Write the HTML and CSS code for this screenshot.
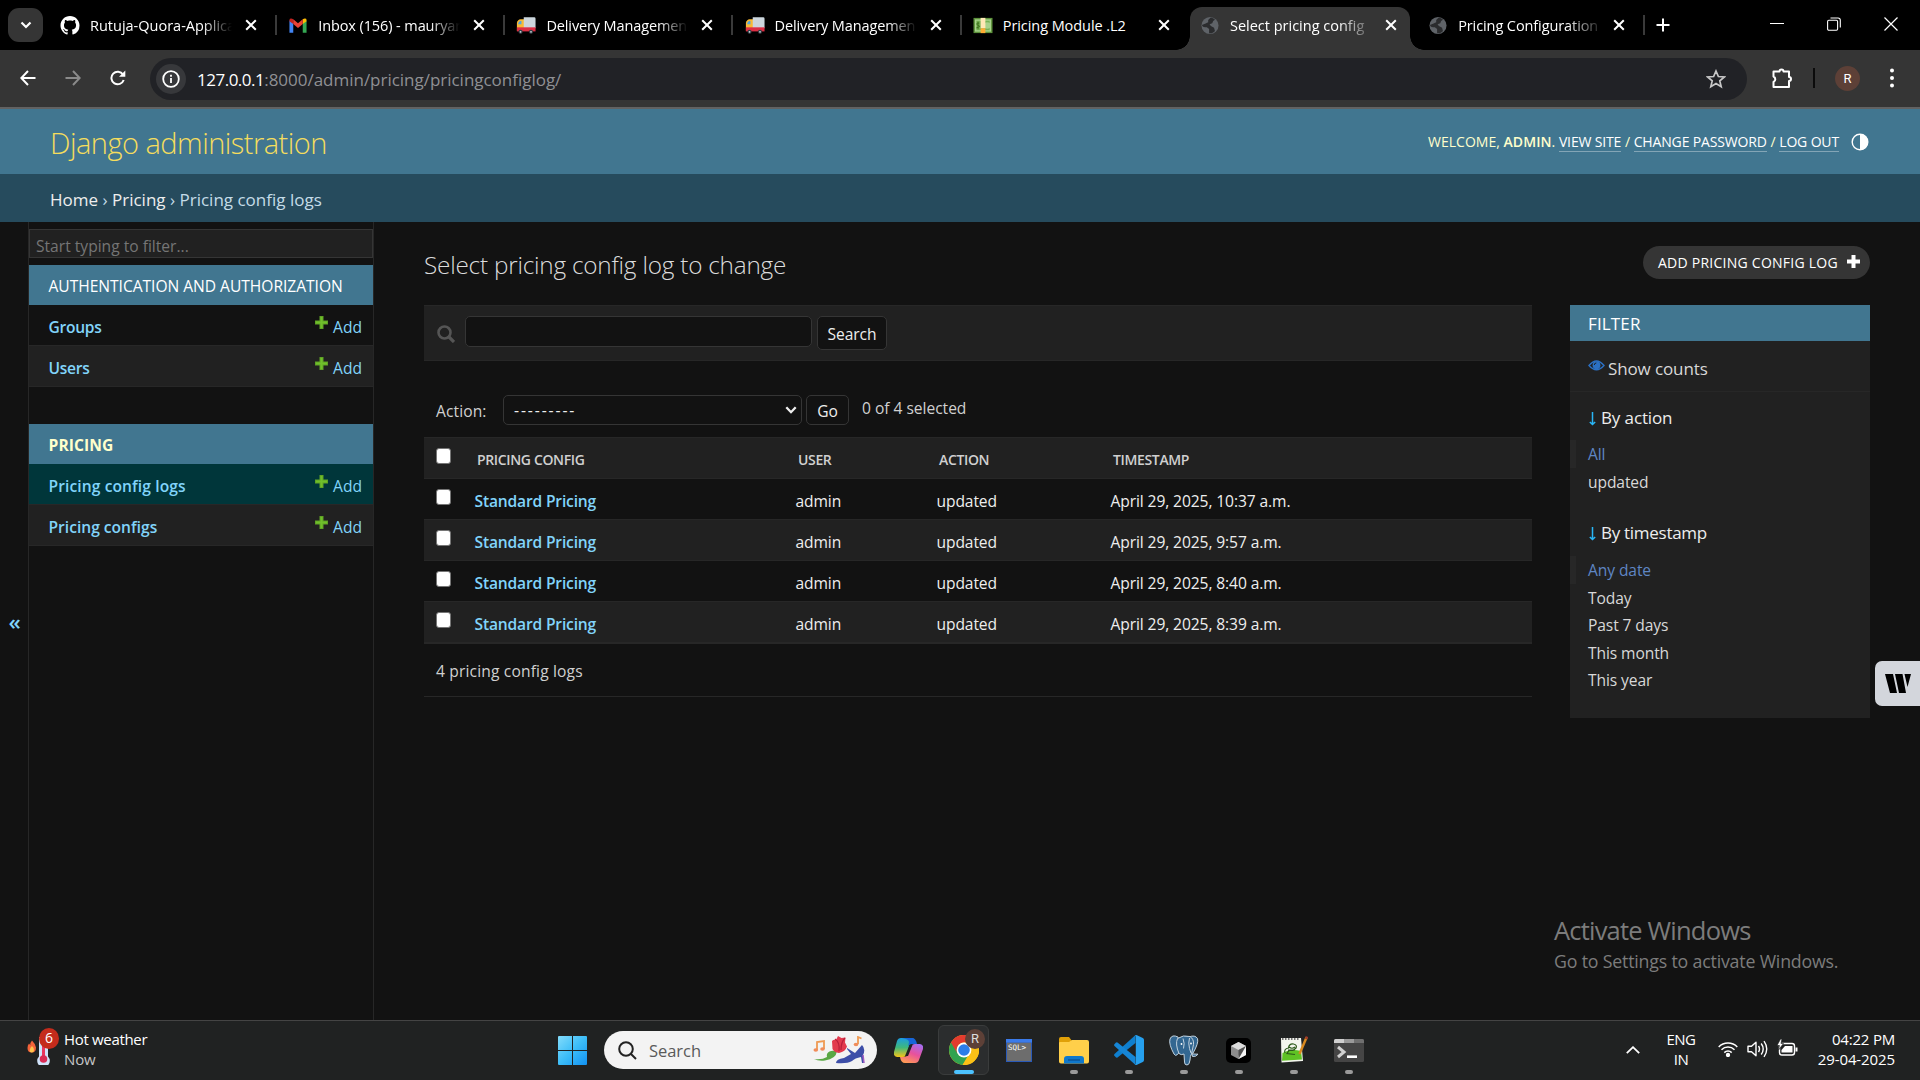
FILE: index.html
```html
<!DOCTYPE html>
<html lang="en">
<head>
<meta charset="utf-8">
<title>Select pricing config log to change | Django site admin</title>
<link rel="stylesheet" href="styles.css">
</head>
<body>
<svg class="defs" aria-hidden="true">
  <symbol id="close" viewBox="0 0 12 12"><path d="M1.2 1.2l9.6 9.6M10.8 1.2l-9.6 9.6" stroke="#fff" stroke-width="2" fill="none"/></symbol>
  <symbol id="truck" viewBox="0 0 22 20">
    <path d="M1 7q1-4 4-4h4v13H1z" fill="#f9b934"/><path d="M2.3 8.500q.6-3.500 2.700-3.500h1v3.500z" fill="#4fa5e0"/>
    <path d="M8.500 1h11.500q1.500 0 1.500 1.500V13h-13z" fill="#ccd6dd"/><path d="M1 12h20.500v4.500H1z" fill="#dd2e44"/>
    <circle cx="5" cy="17" r="2.300" fill="#333c43"/><circle cx="16.500" cy="17" r="2.300" fill="#333c43"/><circle cx="5" cy="17" r="1" fill="#ccd6dd"/><circle cx="16.500" cy="17" r="1" fill="#ccd6dd"/>
  </symbol>
  <symbol id="globe" viewBox="0 0 20 20"><circle cx="10" cy="10" r="9.500" fill="#5f6368"/><path d="M10.500 1.500L8 4v2.500L4.500 8 1 9.500C1.500 12 4 12 6.500 12l2.500 2v4.500c2 .5 5-.5 6.500-2.500l-1-3.500L11 10.500l-1.500-2 3-1 1-2.500 2-1.500c-1.500-1.300-3-2-5-2z" fill="#2b2c2e"/></symbol>
  <symbol id="plus-green" viewBox="0 0 13 13"><path d="M4.500 0h4v4.500H13v4H8.500V13h-4V8.500H0v-4h4.500z" fill="#5fa225"/><path d="M5.500 1h2v4.500H12v2H7.500V12h-2V7.500H1v-2h4.500z" fill="#70bf2b"/></symbol>
</svg>

<div class="screen">
  <header class="tabstrip">
    <button class="tab-search" aria-label="Search tabs"><svg width="12" height="8" viewBox="0 0 12 8"><path d="M1.500 1.500L6 6l4.500-4.500" fill="none" stroke="#fff" stroke-width="2.200"/></svg></button>
    <nav class="tabs">
      <div class="tab"><svg class="fav" viewBox="0 0 16 16"><path fill="#fff" d="M8 0C3.580 0 0 3.580 0 8c0 3.540 2.290 6.530 5.470 7.590.4.070.55-.17.55-.38 0-.19-.01-.82-.01-1.490-2.010.37-2.530-.49-2.690-.94-.09-.23-.48-.94-.82-1.130-.28-.15-.68-.52-.01-.53.63-.01 1.080.58 1.230.82.72 1.210 1.870.87 2.330.66.07-.52.28-.87.51-1.070-1.780-.2-3.640-.89-3.640-3.950 0-.87.31-1.590.82-2.150-.08-.2-.36-1.020.08-2.120 0 0 .67-.21 2.200.82.64-.18 1.320-.27 2-.27s1.360.09 2 .27c1.530-1.040 2.200-.82 2.200-.82.44 1.100.16 1.920.08 2.120.51.56.82 1.270.82 2.150 0 3.070-1.870 3.750-3.650 3.950.29.25.54.73.54 1.480 0 1.070-.01 1.930-.01 2.200 0 .21.15.46.55.38A8.010 8.010 0 0016 8c0-4.420-3.580-8-8-8z"/></svg><span class="tab-title t1">Rutuja-Quora-Applica</span><svg class="x"><use href="#close"/></svg></div>
      <div class="tab"><svg class="fav" viewBox="0 0 20 20"><path d="M1 17.500V4.500l4 3v10z" fill="#4285f4"/><path d="M15 17.500v-10l4-3v13z" fill="#34a853"/><path d="M15 3.500q2-1.500 3.500-.5.500.500.500 2.500L15 8.500z" fill="#fbbc04"/><path d="M5 3.500q-2-1.500-3.500-.5Q1 3.500 1 5.500l4 3z" fill="#c5221f"/><path d="M5 3.500l5 4 5-4v5l-5 4-5-4z" fill="#ea4335"/></svg><span class="tab-title t2">Inbox (156) - mauryar</span><svg class="x"><use href="#close"/></svg></div>
      <div class="tab"><svg class="fav"><use href="#truck"/></svg><span class="tab-title t3">Delivery Managemen</span><svg class="x"><use href="#close"/></svg></div>
      <div class="tab"><svg class="fav"><use href="#truck"/></svg><span class="tab-title t3">Delivery Managemen</span><svg class="x"><use href="#close"/></svg></div>
      <div class="tab last"><svg class="fav" viewBox="0 0 20 20"><path d="M0 2h20v16H0z" fill="#5c913b"/><path d="M1.500 3.500h17v13h-17z" fill="#a7d28b"/><path d="M3 5h14v10H3z" fill="#77b255"/><circle cx="14.500" cy="10" r="3.500" fill="#a7d28b"/><path d="M7.500 2h5v11h-5z" fill="#ffe8b6"/><path d="M7.500 13h5v5h-5z" fill="#ffac33"/><path d="M6 7.500q-3-.5-2.500 1T6 10.500 3 12.500M4.800 6v8" stroke="#3e721d" fill="none"/></svg><span class="tab-title t4">Pricing Module .L2</span><svg class="x"><use href="#close"/></svg></div>
      <div class="tab active"><svg class="fav globe"><use href="#globe"/></svg><span class="tab-title">Select pricing config</span><svg class="x"><use href="#close"/></svg></div>
      <div class="tab"><svg class="fav globe"><use href="#globe"/></svg><span class="tab-title t5">Pricing Configuration</span><svg class="x"><use href="#close"/></svg></div>
    </nav>
    <svg class="newtab" viewBox="0 0 14 14"><path d="M7 .5v13M.5 7h13" stroke="#fff" stroke-width="2"/></svg>
    <div class="win-controls">
      <svg width="14" height="14" viewBox="0 0 14 14"><path d="M0 6.500h14" stroke="#fff" stroke-width="1"/></svg>
      <svg width="14" height="14" viewBox="0 0 14 14" fill="none" stroke="#fff" stroke-width="1.100"><rect x=".6" y="3.300" width="10" height="10" rx="1.200"/><path d="M3.500 1h7.500q2.300 0 2.300 2.300V10.500"/></svg>
      <svg width="14" height="14" viewBox="0 0 14 14"><path d="M.5.5l13 13M13.500.5l-13 13" stroke="#fff" stroke-width="1.200"/></svg>
    </div>
  </header>

  <div class="toolbar">
    <svg class="tool" viewBox="0 0 16 16"><path d="M15.500 8H2M8 1L1.300 8 8 15" fill="none" stroke="#fff" stroke-width="2"/></svg>
    <svg class="tool" viewBox="0 0 16 16"><path d="M.5 8H14M8 1l6.700 7L8 15" fill="none" stroke="#8a8a8a" stroke-width="2"/></svg>
    <svg class="tool" viewBox="0 0 16 16"><path d="M13.700 10A6.300 6.300 0 1 1 13 4.500" fill="none" stroke="#fff" stroke-width="2"/><path d="M15.300.5v6.200H9z" fill="#fff"/></svg>
    <div class="omnibox">
      <span class="info"><svg width="18" height="18" viewBox="0 0 18 18"><circle cx="9" cy="9" r="7.800" fill="none" stroke="#fff" stroke-width="1.800"/><path d="M9 8v5M9 4.800v1.900" stroke="#fff" stroke-width="1.800"/></svg></span>
      <span class="url"><b>127.0.0.1</b>:8000/admin/pricing/pricingconfiglog/</span>
      <svg class="star" viewBox="0 0 20 20"><path d="M10 2l2.400 5.500 5.900.5-4.500 3.900 1.400 5.800L10 14.600l-5.200 3.100 1.400-5.800L1.700 8l5.900-.5z" fill="none" stroke="#c7c7c7" stroke-width="1.700"/></svg>
    </div>
    <svg class="puzzle" viewBox="0 0 22 22"><path d="M2.500 4.500h6a2 2 0 0 1 4 0h5.500v5.500a2 2 0 0 1 0 4v6h-15.500v-5a3 3 0 0 0 0-5.500z" fill="none" stroke="#fff" stroke-width="2" stroke-linejoin="round"/></svg>
    <i class="divider"></i>
    <span class="avatar">R</span>
    <svg class="kebab" viewBox="0 0 6 20"><g fill="#fff"><circle cx="3" cy="2.500" r="2"/><circle cx="3" cy="10" r="2"/><circle cx="3" cy="17.500" r="2"/></g></svg>
  </div>

  <div class="admin">
    <header class="site-header">
      <h1>Django administration</h1>
      <div class="user-tools"><p>Welcome, <strong>admin</strong>. <a>View site</a> / <a>Change password</a> / <a>Log out</a></p>
        <svg width="18" height="18" viewBox="0 0 18 18"><circle cx="9" cy="9" r="7.800" fill="none" stroke="#fff" stroke-width="1.400"/><path d="M9 1a8 8 0 0 1 0 16z" fill="#fff"/></svg></div>
    </header>
    <div class="breadcrumbs"><a>Home</a> › <a>Pricing</a> › <span>Pricing config logs</span></div>

    <div class="main">
      <button class="nav-toggle">«</button>
      <nav class="sidebar">
        <div class="nav-filter">Start typing to filter...</div>
        <section class="module">
          <h2>Authentication and Authorization</h2>
          <div class="row"><a class="model tight">Groups</a><a class="add"><svg><use href="#plus-green"/></svg>Add</a></div>
          <div class="row alt"><a class="model tight">Users</a><a class="add"><svg><use href="#plus-green"/></svg>Add</a></div>
        </section>
        <section class="module">
          <h2 class="current">Pricing</h2>
          <div class="row current"><a class="model wide">Pricing config logs</a><a class="add"><svg><use href="#plus-green"/></svg>Add</a></div>
          <div class="row alt"><a class="model">Pricing configs</a><a class="add"><svg><use href="#plus-green"/></svg>Add</a></div>
        </section>
      </nav>

      <main class="content">
        <div class="title-row">
          <h1>Select pricing config log to change</h1>
          <a class="addlink">Add pricing config log <svg width="13" height="13" viewBox="0 0 13 13"><path d="M4.500 0h4v4.500H13v4H8.500V13h-4V8.500H0v-4h4.500z" fill="#fff"/></svg></a>
        </div>
        <div class="columns">
          <div class="changelist">
            <div class="searchbar">
              <svg width="18" height="18" viewBox="0 0 18 18" fill="none" stroke="#555"><circle cx="7.500" cy="7.500" r="6" stroke-width="2.600"/><path d="M12 12l5 5" stroke-width="3.200"/></svg>
              <div class="field"></div>
              <button class="btn search-btn">Search</button>
            </div>
            <div class="actions">
              <label>Action:</label>
              <div class="select"><span>---------</span><svg width="12" height="8" viewBox="0 0 12 8"><path d="M1.300 1.300L6 6.200l4.700-4.900" fill="none" stroke="#eee" stroke-width="2.300"/></svg></div>
              <button class="btn go-btn">Go</button>
              <span class="count">0 of 4 selected</span>
            </div>
            <table class="results">
              <colgroup><col class="c-check"><col class="c-config"><col class="c-user"><col class="c-action"><col></colgroup>
              <thead><tr><th><i class="check"></i></th><th>Pricing config</th><th>User</th><th>Action</th><th>Timestamp</th></tr></thead>
              <tbody>
                <tr><td><i class="check"></i></td><th>Standard Pricing</th><td>admin</td><td>updated</td><td>April 29, 2025, 10:37 a.m.</td></tr>
                <tr><td><i class="check"></i></td><th>Standard Pricing</th><td>admin</td><td>updated</td><td>April 29, 2025, 9:57 a.m.</td></tr>
                <tr><td><i class="check"></i></td><th>Standard Pricing</th><td>admin</td><td>updated</td><td>April 29, 2025, 8:40 a.m.</td></tr>
                <tr><td><i class="check"></i></td><th>Standard Pricing</th><td>admin</td><td>updated</td><td>April 29, 2025, 8:39 a.m.</td></tr>
              </tbody>
            </table>
            <p class="paginator">4 pricing config logs</p>
          </div>

          <aside class="filter">
            <h2>Filter</h2>
            <div class="counts"><svg width="17" height="12" viewBox="0 0 17 12"><path d="M1 5.500Q8.500-3.500 16 5.500 8.500 14 1 5.500z" fill="none" stroke="#2b70c4" stroke-width="1.400"/><circle cx="8.500" cy="5.200" r="3.900" fill="#2b70c4"/><path d="M6.300 5a2 2 0 0 1 2-2" stroke="#212121" fill="none"/></svg>Show counts</div>
            <h3><svg width="7" height="14" viewBox="0 0 7 14"><path d="M3.500 0v12M.8 10l2.700 2.500L6.200 10" fill="none" stroke="#29b6f6" stroke-width="1.500"/></svg>By action</h3>
            <ul class="by-action"><li class="selected">All</li><li>updated</li></ul>
            <h3 class="second"><svg width="7" height="14" viewBox="0 0 7 14"><path d="M3.500 0v12M.8 10l2.700 2.500L6.200 10" fill="none" stroke="#29b6f6" stroke-width="1.500"/></svg>By timestamp</h3>
            <ul class="by-time"><li class="selected">Any date</li><li>Today</li><li>Past 7 days</li><li>This month</li><li>This year</li></ul>
          </aside>
        </div>
      </main>
    </div>
    <div class="side-widget"><svg width="26" height="19" viewBox="0 0 26 19"><path d="M0 0h8l4 19H5zM10 0h7.500l3.500 19h-7zM19.500 0H26l-3.500 13z" fill="#000"/></svg></div>
    <div class="watermark"><p class="big">Activate Windows</p><p>Go to Settings to activate Windows.</p></div>
  </div>

  <footer class="taskbar">
    <div class="weather">
      <svg width="35" height="36" viewBox="0 0 35 36">
        <path d="M5 11.500q3.500 3.500 4 7Q9 23.500 4.800 23.500 .5 23.500 .5 19q0-3 1.500-4.500L3.200 16q0-2.500 1.800-4.500z" fill="#f4633a"/><path d="M5 17q2.300 2 2 4.200Q7 23.500 4.800 23.500 2.500 23.500 2.700 21 3.200 18.500 5 17z" fill="#ffc34d"/>
        <path d="M12 8h9v19.500a6.300 6.300 0 1 1-9 0z" fill="#cfe3fa"/><path d="M15 14h3v15h-3z" fill="#e8365d"/><circle cx="16.500" cy="30" r="3.800" fill="#d92c55"/>
      </svg>
      <span class="badge">6</span>
      <div class="weather-text"><span>Hot weather</span><span class="now">Now</span></div>
    </div>
    <svg class="start" viewBox="0 0 29 29"><defs><linearGradient id="w" x1="0" y1="0" x2="1" y2="1"><stop offset="0" stop-color="#83dcfb"/><stop offset=".5" stop-color="#3cbdf8"/><stop offset="1" stop-color="#1292f2"/></linearGradient></defs><path d="M1 0h13v14H0V1q0-1 1-1zM15 0h13q1 0 1 1v13H15zM0 15h14v14H1q-1 0-1-1zM15 15h14v13q0 1-1 1H15z" fill="url(#w)"/></svg>
    <div class="tb-search">
      <svg width="19" height="19" viewBox="0 0 19 19" fill="none" stroke="#222" stroke-width="2"><circle cx="8" cy="8" r="6.800"/><path d="M13 13l5 5"/></svg>
      <span>Search</span>
      <svg class="doodle" width="52" height="28" viewBox="0 0 52 28">
        <path d="M4 14V6l7-1v8" fill="none" stroke="#ef9a52" stroke-width="1.800"/><ellipse cx="2.800" cy="14" rx="2.300" ry="1.800" fill="#f08c5a"/><ellipse cx="9.500" cy="13" rx="2.300" ry="1.800" fill="#f08c5a"/>
        <path d="M24 15q-1 8-12 9.500-7 .8-11-1.500 8 1 13-2-1-4 2.500-5.500 2.500-1 5-.5" fill="#5aa845"/>
        <path d="M19 5q2-2 4-1l2-4 3.500 2 4-.5-.5 5 2 4q-1.500 5-8 6.500-5-.5-6.500-4z" fill="#e23a4e"/><path d="M22 3q5 3 4 12M32 2q-4 4-4 12" stroke="#b81f3b" stroke-width="1.200" fill="none"/>
        <path d="M34 12l8 5 7-8q4 4 1 10l1 8h-2l-1-6q-6 1-9 4-5 3-16 2 0-4 8-5l7-4-4-5z" fill="#3d4ea8"/><path d="M50 19l1 8" stroke="#a05bc0" stroke-width="1.500"/>
        <path d="M45 8V1l3.500 1.500" fill="none" stroke="#ef9a52" stroke-width="1.800"/><ellipse cx="43" cy="8.500" rx="2.300" ry="1.800" fill="#f08c5a"/>
      </svg>
    </div>
    <div class="apps">
      <div class="app"><svg width="29" height="26" viewBox="0 0 29 26"><defs><linearGradient id="c1" x1="0" y1="0" x2="0" y2="1"><stop offset="0" stop-color="#1b9de2"/><stop offset=".5" stop-color="#3fb87b"/><stop offset="1" stop-color="#f5c518"/></linearGradient><linearGradient id="c2" x1=".8" y1="0" x2=".3" y2="1"><stop offset="0" stop-color="#a56df0"/><stop offset=".5" stop-color="#e8519c"/><stop offset="1" stop-color="#ff9a55"/></linearGradient></defs><path d="M7 1h13q-3 1-4 5l-3 11q-1 3-4 3H3q-4-1-3-5L3 4Q4 1 7 1z" fill="url(#c1)"/><path d="M8 1h11q3 1 4 6h-5q-3 0-4 3l1-5q0-3-7-4z" fill="#1765d8"/><path d="M21 7h5q4 1 3 5l-4 11q-1 3-4 3H11q-4 0-5-6h4q3 0 4-3l3-7q1-3 4-3z" fill="url(#c2)"/><path d="M15.500 8h3L14 19h-3z" fill="#202222"/></svg></div>
      <div class="app focused"><svg width="30" height="30" viewBox="0 0 30 30"><circle cx="15" cy="15" r="15" fill="#fbc116"/><path d="M15 15L2 7.500a15 15 0 0 0 11.500 22.400L20.500 18z" fill="#31a350"/><path d="M2 7.500a15 15 0 0 1 26 0H15a7.500 7.500 0 0 0-6.500 11.200z" fill="#e33b2e"/><path d="M15 7.500h13A15 15 0 0 1 13.500 30l8-11.200z" fill="#fbc116"/><circle cx="15" cy="15" r="7.400" fill="#fff"/><circle cx="15" cy="15" r="5.800" fill="#2b7de9"/></svg><span class="profile">R</span><i class="run on"></i></div>
      <div class="app"><svg width="26" height="23" viewBox="0 0 26 23"><path d="M0 0h26v23H0z" fill="#2a5ab8"/><path d="M1 3.500h24V22H1z" fill="#6d6d6d"/><path d="M0 0h26v3.500H0z" fill="#3b7bea"/><text x="2" y="10.500" class="sql">SQL&gt;</text></svg></div>
      <div class="app"><svg width="30" height="27" viewBox="0 0 30 27"><path d="M0 2q0-2 2-2h8l3 4v5H0z" fill="#e0a008"/><path d="M0 6q0-1 1-1h9l3-2h15q2 0 2 2v19.500q0 2-2 2H2q-2 0-2-2z" fill="#ffcf4a"/><path d="M5 26.500V22q0-3 3-3h14q3 0 3 3v4.500z" fill="#0f78cc"/><path d="M9 23h12" stroke="#0a4f91" stroke-width="1.300"/></svg><i class="run"></i></div>
      <div class="app"><svg width="30" height="30" viewBox="0 0 30 30"><path d="M21.500 0v8L3.500 22.500q-1 .5-1.700-.2L.4 20.800q-.7-.9.100-1.700z" fill="#0f7fce"/><path d="M21.500 30v-8L3.500 7.500q-1-.5-1.700.2L.4 9.200q-.7.900.100 1.700z" fill="#1686d6"/><path d="M21 .300q1-.5 2-.1l5.800 2.700q1.200.6 1.200 2v20.200q0 1.400-1.200 2L23 29.800q-1 .4-2-.1.800-.4.800-1.700V2q0-1.300-.8-1.700z" fill="#26a0ee"/></svg><i class="run"></i></div>
      <div class="app"><svg width="30" height="31" viewBox="0 0 30 31"><g fill="#336791" stroke="#c3d3df" stroke-width="1" stroke-linejoin="round"><path d="M9 2Q3-1 1 4q-1.500 5 4 15 1.500 2.500 3.500.5L12 15z"/><path d="M20 2q6-2.500 8.500 1.500Q30 8 23.500 19l5.500.2q-2 2.800-5.500 2.300z"/><path d="M8.500 3.500Q14-.5 21 1.500q4 2.500 3.500 8l-2 9.500q-1.500 2-1.500 6-.5 5-3 5t-2.500-3l-.5-8q-3 1.500-5-.5Q6 9 8.500 3.500z"/><path d="M14 3.500q2 5 .5 10M20.500 3q-1.500 5 0 10.500L22 18" fill="none"/></g><circle cx="12.500" cy="9" r=".9" fill="#fff"/><circle cx="22" cy="8.500" r=".9" fill="#fff"/></svg><i class="run"></i></div>
      <div class="app"><svg width="25" height="25" viewBox="0 0 25 25"><rect width="25" height="25" rx="5" fill="#000"/><path d="M12.500 4L20 8v9l-7.500 4L5 17V8z" fill="#8d8d8d"/><path d="M12.500 4L20 8l-7.500 4L5 8z" fill="#dcdcdc"/><path d="M20 8v9l-7.500 4v-3L17 10l-4.500 2z" fill="#f4f4f4"/><path d="M20 8l-7.500 13V12z" fill="#505050"/></svg><i class="run"></i></div>
      <div class="app"><svg width="28" height="28" viewBox="0 0 28 28"><path d="M1 2h20l2 23-21.500 1.500z" fill="#f4f6ee"/><path d="M2.500 17q8-5 18.500-2l1 8.500-20 1.200z" fill="#5fc224"/><path d="M2 3h18" stroke="#777" stroke-width="2" stroke-dasharray="1.500 1.500"/><path d="M5 17q-1.500-4 3.500-5 .5-4.500 5-4 4 1 2.500 4l-3 2.500H9l-2 3 8 1M9 11q3 2.500 6 0M8 14h7" fill="none" stroke="#2c5a1a" stroke-width="1.200"/><path d="M26.500 1.500L19.500 18" stroke="#d98a1f" stroke-width="2.500"/><path d="M27 .5l-1 2.500" stroke="#9c3a2a" stroke-width="2.500"/></svg><i class="run"></i></div>
      <div class="app"><svg width="30" height="23" viewBox="0 0 30 23"><rect width="30" height="23" rx="1.500" fill="#454545"/><path d="M1.500 0H10v4H0V1.500Q0 0 1.500 0z" fill="#cfcfcf"/><path d="M10 0h10v4H10z" fill="#9a9a9a"/><path d="M20 0h8.500Q30 0 30 1.500V4H20z" fill="#6f6f6f"/><path d="M4 8l6 5-6 5" fill="none" stroke="#d0d0d0" stroke-width="3"/><path d="M13 17.700h10" stroke="#fff" stroke-width="2.600"/></svg><i class="run"></i></div>
    </div>
    <div class="tray">
      <svg class="chev" width="14" height="8" viewBox="0 0 14 8"><path d="M.8 7.200L7 1.200l6.200 6" fill="none" stroke="#fff" stroke-width="1.800"/></svg>
      <div class="lang"><span>ENG</span><span>IN</span></div>
      <svg class="wifi" width="20" height="16" viewBox="0 0 20 16" fill="none" stroke="#fff" stroke-width="1.500"><path d="M.7 6a13 13 0 0 1 18.600 0M3.500 8.800a9.200 9.200 0 0 1 13 0M6.300 11.600a5.200 5.200 0 0 1 7.400 0"/><circle cx="10" cy="14" r="1.400" fill="#fff"/></svg>
      <svg class="vol" width="21" height="18" viewBox="0 0 21 18" fill="none" stroke="#fff" stroke-width="1.400"><path d="M1 6.200h3.500L9 2.200v13.600L4.500 11.800H1z" stroke-linejoin="round"/><path d="M11.500 6q2 3 0 6M14.200 3.500q4 5.500 0 11M17 1.200q5.500 7.800 0 15.600"/></svg>
      <svg class="bat" width="21" height="18" viewBox="0 0 21 18"><rect x="2.500" y="4.500" width="15" height="11.500" rx="2.500" fill="none" stroke="#fff" stroke-width="1.400"/><path d="M18.500 8.500h2v4h-2z" fill="#fff"/><path d="M8 7h7.500v6.500h-11V11z" fill="#fff"/><path d="M3.500 0L0 6.500h2.500L1.500 11l5-6.500H4L5 0z" fill="#fff" stroke="#202222" stroke-width=".7"/></svg>
      <div class="clock"><span>04:22 PM</span><span class="date">29-04-2025</span></div>
    </div>
  </footer>
</div>
</body>
</html>
```
FILE: styles.css
```css
* { box-sizing: border-box; margin: 0; padding: 0; }
body { width: 1920px; height: 1080px; overflow: hidden; background: #121212; color: #eee; font: 400 15.6px "Open Sans", "Noto Sans", sans-serif; }
svg { display: block; flex: none; }
button { border: 0; background: none; color: inherit; font: inherit; }
i { display: block; font-style: normal; }
.defs { position: absolute; width: 0; height: 0; }
.screen { display: grid; grid-template-rows: 50px 59px 911px 60px; height: 1080px; }

/* browser tab strip */
.tabstrip { display: flex; background: #000; }
.tab-search { display: grid; place-items: center; width: 35px; height: 34px; margin: 8px 6px 0 8px; border-radius: 11px; background: #353535; }
.tabs { display: flex; }
.tab { position: relative; display: flex; align-items: center; width: 228.2px; height: 43px; margin-top: 7px; padding: 0 0 7px 11px; }
.tab::after { content: ""; width: 2px; height: 20px; margin-left: 18px; background: #3a3a3a; }
.tab.last::after, .tab.active::after { visibility: hidden; }
.fav { width: 20px; height: 19px; margin-right: 10px; }
.fav.globe { width: 18px; margin-right: 11px; }
.tab-title { flex: none; width: 146px; margin-right: 9px; white-space: nowrap; font-size: 14.5px; line-height: 24px; padding-top: 1px; color: #fff; -webkit-mask: linear-gradient(90deg, #000 112px, transparent 142px); mask: linear-gradient(90deg, #000 112px, transparent 142px); }
.t2 { letter-spacing: -.1px; }
.t3 { letter-spacing: -.12px; }
.t4 { letter-spacing: -.07px; -webkit-mask: none; mask: none; }
.t5 { letter-spacing: -.09px; }
.globe + .tab-title { -webkit-mask: linear-gradient(90deg, #000 108px, transparent 146px); mask: linear-gradient(90deg, #000 108px, transparent 146px); }
.x { width: 12px; height: 12px; }
.tab.active { border-radius: 12px 12px 0 0; background: #353535; width: 220px; margin-right: 8.2px; }
.tab.active::before { content: ""; position: absolute; left: -14px; bottom: 0; width: 248px; height: 14px; background: radial-gradient(circle at 0 0, transparent 13.5px, #353535 14px) left / 14px 14px no-repeat, radial-gradient(circle at 100% 0, transparent 13.5px, #353535 14px) right / 14px 14px no-repeat; }
.newtab { width: 14px; height: 14px; margin: 18px 0 0 10px; }
.win-controls { display: flex; gap: 43px; margin: 17px 22px 0 auto; }

/* address toolbar */
.toolbar { display: flex; align-items: center; padding: 0 25px 1px 20px; background: #353535; border-bottom: 2px solid #626262; }
.tool { width: 16px; height: 16px; margin-right: 29px; }
.tool:nth-of-type(3) { margin-right: 24px; }
.omnibox { display: flex; align-items: center; width: 1597px; height: 42px; margin-top: 1px; padding: 0 21px 0 6px; border-radius: 21px; background: #212226; }
.info { display: grid; place-items: center; width: 30px; height: 30px; margin-right: 11px; border-radius: 50%; background: #37383b; }
.url { flex: 1; padding-top: 1px; font-size: 17px; color: #8f9094; letter-spacing: -.02px; }
.url b { font-weight: 400; color: #fff; letter-spacing: -.5px; }
.star { width: 20px; height: 20px; }
.puzzle { width: 22px; height: 22px; margin-left: 24px; }
.divider { width: 2px; height: 20px; margin: 0 20px 0 20px; background: #0b0b0b; }
.avatar { display: grid; place-items: center; width: 25px; height: 25px; border-radius: 50%; background: #5d4037; font: 13px Roboto, sans-serif; color: #fff; }
.kebab { width: 6px; height: 20px; margin-left: auto; }

/* admin shell */
.admin { position: relative; display: grid; grid-template-rows: 65px 48px 798px; }
.site-header { display: flex; justify-content: space-between; padding: 0 51px 0 50px; background: #417690; }
.site-header h1 { font-size: 29px; font-weight: 300; line-height: 68px; letter-spacing: -.52px; color: #f5dd5d; }
.user-tools { display: flex; gap: 12px; padding-top: 24px; font-size: 14px; line-height: 17px; text-transform: uppercase; color: #ffc; white-space: nowrap; }
.user-tools strong { font-weight: 600; letter-spacing: .1px; }
.user-tools a { color: #fff; letter-spacing: -.15px; border-bottom: 1px solid rgba(255,255,255,.35); }
.breadcrumbs { padding-left: 50px; background: #264b5d; font-size: 17px; line-height: 52px; color: #c4dce8; }
.breadcrumbs a { color: #eee; }
.main { display: grid; grid-template-columns: 28px 346px 1fr; }

/* sidebar */
.nav-toggle { padding: 0 0 0 1px; font-size: 22px; font-weight: 600; color: #81d4fa; }
.sidebar { padding-top: 7px; border: solid #272727; border-width: 0 1px; }
.nav-filter { height: 29px; padding: 2px 0 0 6px; margin-bottom: 7px; border: 1px solid #353535; background: #212121; color: #757575; line-height: 29px; }
.module { margin-bottom: 37px; }
.module h2 { height: 40px; padding: 1px 0 0 19.500px; background: #417690; color: #fff; font-size: 15.6px; font-weight: 400; line-height: 40px; letter-spacing: -.03px; text-transform: uppercase; }
.module h2.current { font-weight: 700; color: #ffc; letter-spacing: .1px; }
.row { display: flex; justify-content: space-between; height: 41px; padding: 1px 11px 0 19.500px; border-bottom: 1px solid #272727; line-height: 42px; color: #81d4fa; }
.row.alt { background: #212121; }
.row.current { background: #00363a; }
.model { font-weight: 600; }
.model.tight { letter-spacing: -.3px; }
.model.wide { letter-spacing: .1px; }
.add { display: flex; gap: 5px; }
.add svg { width: 13px; height: 13px; margin-top: 10px; }

/* content */
.content { padding: 24px 50px 0; }
.title-row { display: flex; justify-content: space-between; height: 59px; }
.title-row h1 { font-size: 24.3px; font-weight: 300; line-height: 38px; letter-spacing: -.21px; color: #dcdcdc; }
.addlink { display: flex; align-items: center; justify-content: space-between; width: 227px; height: 33px; padding: 0 10px 0 15px; border-radius: 17px; background: #353535; color: #fff; font-size: 14px; letter-spacing: .25px; text-transform: uppercase; }
.addlink svg { margin-bottom: 2px; }
.columns { display: grid; grid-template-columns: 1108px 300px; gap: 38px; align-items: start; }
.searchbar { display: flex; align-items: flex-start; height: 56px; padding: 10px 12px; border: solid #272727; border-width: 1px 0; background: #212121; }
.searchbar svg { margin: 9px 10px 0 1px; }
.field { width: 347px; height: 31px; border: 1px solid #353535; border-radius: 5px; background: #121212; }
.btn { border: 1px solid #353535; border-radius: 5px; background: #121212; color: #eee; }
.search-btn { width: 70px; height: 34px; margin-left: 5px; padding-top: 2px; letter-spacing: -.1px; }
.actions { display: flex; height: 76px; padding: 34px 12px 0; }
.actions label { width: 67px; padding-top: 1px; line-height: 31px; letter-spacing: .1px; color: #d0d0d0; }
.select { display: flex; align-items: center; justify-content: space-between; width: 299px; height: 30px; padding: 0 4px 0 10px; border: 1px solid #353535; border-radius: 5px; }
.select span { letter-spacing: 1.900px; }
.go-btn { width: 43px; height: 30px; margin-left: 4px; padding-top: 2px; }
.count { margin-left: 13px; line-height: 27px; letter-spacing: -.03px; color: #d0d0d0; }
.results { width: 1108px; table-layout: fixed; border-collapse: separate; border-spacing: 0; border-bottom: 1px solid #272727; }
.c-check { width: 41px; } .c-config { width: 321px; } .c-user { width: 141px; } .c-action { width: 174px; }
.results th, .results td { height: 41px; padding: 3px 9.500px 0; border-bottom: 1px solid #272727; text-align: left; line-height: 20px; white-space: nowrap; letter-spacing: -.1px; }
.results td:first-child, .results th:first-child { padding: 0 0 4px 12px; }
.results thead th { height: 42px; padding-left: 12px; border-top: 1px solid #272727; background: #212121; color: #d0d0d0; font-size: 14px; font-weight: 600; letter-spacing: -.35px; text-transform: uppercase; }
.results tbody th { font-weight: 600; letter-spacing: -.17px; color: #81d4fa; }
.results tbody tr:nth-child(even) { background: #212121; }
.check { width: 15px; height: 16px; border: 1px solid #767676; border-radius: 3px; background: #fff; }
.paginator { height: 53px; padding-left: 12px; border-bottom: 1px solid #272727; line-height: 54px; letter-spacing: .15px; color: #d0d0d0; }

/* filter panel */
.filter { height: 413px; background: #212121; color: #d8d8d8; }
.filter h2 { height: 36px; padding-left: 18px; background: #417690; color: #fff; font-size: 17px; font-weight: 400; line-height: 37px; letter-spacing: .15px; text-transform: uppercase; }
.counts { display: flex; height: 51px; padding-left: 19px; border-bottom: 1px solid #272727; font-size: 17px; line-height: 56px; letter-spacing: -.12px; }
.counts svg { margin: 19px 3px 0 -1px; }
.filter h3 { display: flex; height: 48px; padding-left: 19px; font-size: 17px; font-weight: 400; line-height: 52px; letter-spacing: -.12px; color: #eee; }
.filter h3.second { letter-spacing: -.28px; }
.filter h3 svg { margin: 20px 5px 0 0; }
.filter ul { list-style: none; letter-spacing: -.1px; }
.filter li { height: 27.500px; padding-left: 18px; line-height: 28px; }
.filter li.selected { padding-left: 12px; border-left: 6px solid #272727; color: #5f86c4; }
.by-action { height: 67px; }
.by-time { padding-top: 1px; }

/* overlays on the page */
.side-widget { position: absolute; right: 0; top: 552px; display: grid; place-items: center; width: 45px; height: 45px; padding-left: 1px; border-radius: 7px 0 0 7px; background: #d3d6dc; }
.watermark { position: absolute; left: 1554px; top: 803px; color: #7c7c7c; font-size: 17.800px; line-height: 24px; letter-spacing: -.2px; white-space: nowrap; }
.watermark .big { font-size: 25.500px; line-height: 37px; letter-spacing: -.8px; }

/* taskbar */
.taskbar { display: flex; background: #202222; border-top: 1px solid #444; line-height: 20px; color: #fff; font-size: 15px; }
.weather { position: relative; display: flex; width: 558px; padding: 8px 0 0 27px; }
.badge { position: absolute; left: 39px; top: 7px; width: 20px; height: 21px; border-radius: 50%; background: #c42b1c; text-align: center; font-size: 14px; line-height: 20px; }
.weather-text { display: flex; flex-direction: column; margin-left: 2px; letter-spacing: -.33px; }
.now { color: #c6c6c6; letter-spacing: -.1px; }
.start { width: 29px; height: 29px; margin-top: 15px; }
.tb-search { display: flex; align-items: center; width: 273px; height: 38px; margin: 10px 0 0 17px; padding: 0 12px 0 14px; border-radius: 19px; background: #f3f3f3; color: #5a5a5a; }
.tb-search span { margin: 0 auto 0 12px; padding-top: 1px; font-size: 16.500px; letter-spacing: -.05px; }
.apps { display: flex; margin-left: 4px; }
.app { position: relative; display: grid; place-items: center; width: 55px; height: 58px; }
.focused::before { content: ""; position: absolute; inset: 4px 2px; border: 1px solid #3a3c3c; border-radius: 6px; background: #2b2d2e; }
.focused svg { position: relative; }
.profile { position: absolute; right: 6px; top: 8px; width: 20px; height: 20px; border-radius: 50%; background: #5d4037; text-align: center; font: 13px/20px Roboto, sans-serif; color: #ddd; }
.run { position: absolute; left: 23.500px; top: 49px; width: 8px; height: 4px; border-radius: 2px; background: #9a9a9a; }
.run.on { left: 17.500px; width: 20px; background: #4cc2ff; }
.sql { font: 7.500px "DejaVu Sans Mono", monospace; fill: #fff; }
.tray { display: flex; margin-left: auto; padding: 8px 25px 0 0; }
.chev { margin: 17px 27px 0 0; }
.lang, .clock { display: flex; flex-direction: column; align-items: center; }
.lang { width: 28px; letter-spacing: -.5px; }
.wifi { margin: 12px 9px 0 23px; }
.vol { margin-top: 11px; }
.bat { margin: 10px 18px 0 9px; }
.clock { align-items: flex-end; width: 79px; letter-spacing: -.2px; }
.date { letter-spacing: -.1px; }
```
